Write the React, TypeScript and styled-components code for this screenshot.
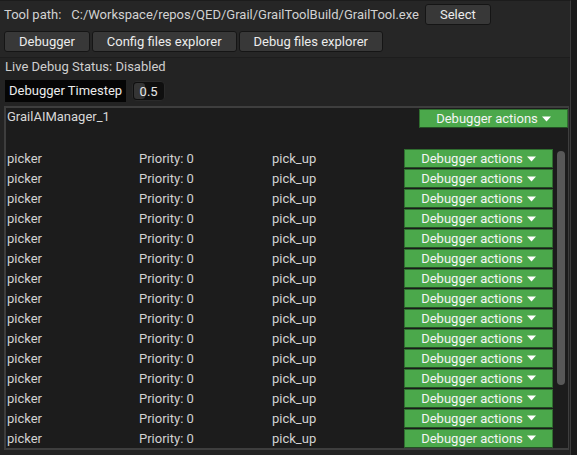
import React from 'react';
import styled, {createGlobalStyle} from 'styled-components';

const ROWS = 15;

const Global = createGlobalStyle`
  html, body {
    margin: 0;
    padding: 0;
    background: #1a1a1a;
  }
  body {
    font-family: 'Roboto', 'Liberation Sans', sans-serif;
    font-size: 13px;
    color: #d6d6d6;
    -webkit-font-smoothing: antialiased;
  }
`;

const Page = styled.div`
  display: flex;
  width: 577px;
  height: 455px;
  overflow: hidden;
`;

const Window = styled.div`
  width: 571px;
  height: 455px;
  display: flex;
  flex-direction: column;
  background: #262626;
  border-right: 1px solid #3c3c3c;
  border-top: 1px solid #1c1c1c;
  box-sizing: border-box;
`;

const Row = styled.div`
  display: flex;
  align-items: center;
  gap: 2px;
`;

const TopRow = styled(Row)`
  padding: 2px 4px 0 4px;
  height: 22px;
`;

const ButtonRow = styled(Row)`
  padding: 6px 4px 5px 4px;
`;

const Label = styled.span`
  white-space: nowrap;
  color: #d2d2d2;
`;

const PathText = styled(Label)`
  margin-left: 8px;
  margin-right: 4px;
`;

const Button = styled.button`
  font: inherit;
  color: #ececec;
  background: #383838;
  border: 1px solid #151515;
  border-radius: 3px;
  height: 21px;
  padding: 0 14px;
  line-height: 19px;
  cursor: pointer;
`;

const Lower = styled.div`
  flex: 1;
  display: flex;
  flex-direction: column;
  background: #232323;
  border-top: 1px solid #1d1d1d;
  padding: 0 0 0 4px;
  min-height: 0;
`;

const Status = styled.div`
  padding: 1px 1px 6px;
  color: #cfcfcf;
  line-height: 15px;
`;

const Timestep = styled(Row)`
  gap: 6px;
  margin-left: 1px;
  margin-bottom: 4px;
`;

const TimestepLabel = styled.div`
  background: #050505;
  color: #ececec;
  height: 22px;
  line-height: 22px;
  padding: 0 4px 0 4px;
  white-space: nowrap;
`;

const SliderBox = styled.div`
  position: relative;
  width: 33px;
  height: 20px;
  background: #0f0f0f;
  border: 1px solid #2a2a2a;
  border-radius: 4px;
  box-sizing: border-box;
  display: flex;
  align-items: center;
  justify-content: center;
  color: #e6e6e6;
`;

const Grab = styled.div`
  position: absolute;
  left: 1px;
  top: 1px;
  bottom: 1px;
  width: 11px;
  background: #353535;
  border-radius: 3px;
`;

const SliderValue = styled.span`
  position: relative;
`;

const Panel = styled.div`
  flex: 1;
  display: flex;
  flex-direction: column;
  background: #1c1c1c;
  border: 2px solid #3e3e3e;
  border-right: 1px solid #3e3e3e;
  margin-right: 1px;
  margin-bottom: 5px;
  min-height: 0;
  overflow: hidden;
`;

const PanelHeader = styled.div`
  display: flex;
  justify-content: space-between;
  align-items: flex-start;
  padding: 1px 0 0 1px;
  height: 41px;
  box-sizing: border-box;
`;

const ManagerName = styled.span`
  line-height: 15px;
  color: #d8d8d8;
`;

const Body = styled.div`
  flex: 1;
  display: flex;
  min-height: 0;
`;

const List = styled.div`
  display: flex;
  flex-direction: column;
`;

const ItemRow = styled.div`
  display: grid;
  grid-template-columns: 132px 133px 132px 149px;
  align-items: center;
  height: 20px;
  padding-left: 1px;
`;

const Cell = styled.span`
  color: #d2d2d2;
  white-space: nowrap;
`;

const ActionButton = styled.div`
  display: flex;
  align-items: center;
  justify-content: center;
  gap: 4px;
  width: 149px;
  height: 19px;
  background: #4ba84b;
  border: 1px solid #2f6e2f;
  border-bottom-color: #244f24;
  box-sizing: border-box;
  color: #f4f4f4;
  cursor: pointer;
`;

const Caret = () => (
  <svg width="9" height="6" viewBox="0 0 9 6">
    <path d="M0 0.5 L9 0.5 L4.5 5.5 Z" fill="#ffffff"/>
  </svg>
);

const ScrollTrack = styled.div`
  width: 8px;
  margin-left: 4px;
  padding-top: 2px;
`;

const ScrollThumb = styled.div`
  width: 8px;
  height: 234px;
  background: #585858;
  border-radius: 4px;
`;

const Actions = () => (
  <ActionButton>
    Debugger actions <Caret/>
  </ActionButton>
);

export default function App() {
  const rows = Array.from({length: ROWS}, (_, i) => i);
  return (
    <Page>
      <Global/>
      <Window>
        <TopRow>
          <Label>Tool path:</Label>
          <PathText>C:/Workspace/repos/QED/Grail/GrailToolBuild/GrailTool.exe</PathText>
          <Button>Select</Button>
        </TopRow>
        <ButtonRow>
          <Button>Debugger</Button>
          <Button>Config files explorer</Button>
          <Button>Debug files explorer</Button>
        </ButtonRow>
        <Lower>
          <Status>Live Debug Status: Disabled</Status>
          <Timestep>
            <TimestepLabel>Debugger Timestep</TimestepLabel>
            <SliderBox>
              <Grab/>
              <SliderValue>0.5</SliderValue>
            </SliderBox>
          </Timestep>
          <Panel>
            <PanelHeader>
              <ManagerName>GrailAIManager_1</ManagerName>
              <Actions/>
            </PanelHeader>
            <Body>
              <List>
                {rows.map(i => (
                  <ItemRow key={i}>
                    <Cell>picker</Cell>
                    <Cell>Priority: 0</Cell>
                    <Cell>pick_up</Cell>
                    <Actions/>
                  </ItemRow>
                ))}
              </List>
              <ScrollTrack>
                <ScrollThumb/>
              </ScrollTrack>
            </Body>
          </Panel>
        </Lower>
      </Window>
    </Page>
  );
}
